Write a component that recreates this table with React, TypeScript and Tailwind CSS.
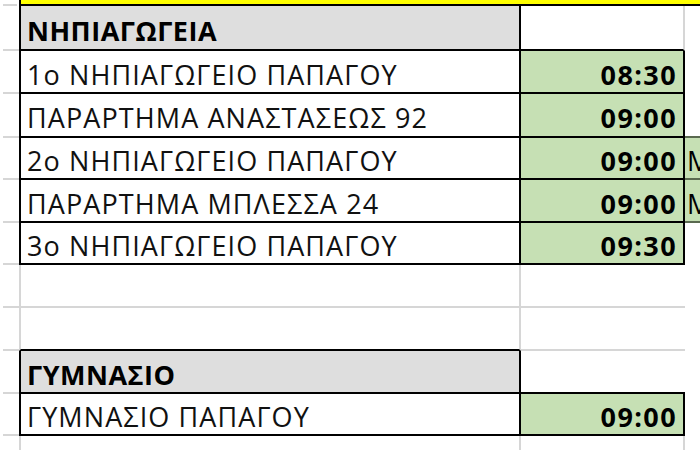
import React from 'react'

type Row = {
  kind: 'head' | 'item' | 'blank' | 'tail'
  label?: string
  time?: string
  extra?: boolean
  h: number
  headTimeRightGrid?: boolean
}

const rows: Row[] = [
  { kind: 'head', label: 'ΝΗΠΙΑΓΩΓΕΙΑ', h: 45, headTimeRightGrid: true },
  { kind: 'item', label: '1ο ΝΗΠΙΑΓΩΓΕΙΟ ΠΑΠΑΓΟΥ', time: '08:30', h: 43 },
  { kind: 'item', label: 'ΠΑΡΑΡΤΗΜΑ ΑΝΑΣΤΑΣΕΩΣ 92', time: '09:00', h: 44 },
  { kind: 'item', label: '2ο ΝΗΠΙΑΓΩΓΕΙΟ ΠΑΠΑΓΟΥ', time: '09:00', extra: true, h: 42 },
  { kind: 'item', label: 'ΠΑΡΑΡΤΗΜΑ ΜΠΛΕΣΣΑ 24', time: '09:00', extra: true, h: 43 },
  { kind: 'item', label: '3ο ΝΗΠΙΑΓΩΓΕΙΟ ΠΑΠΑΓΟΥ', time: '09:30', h: 42 },
  { kind: 'blank', h: 43 },
  { kind: 'blank', h: 43 },
  { kind: 'head', label: 'ΓΥΜΝΑΣΙΟ', h: 43 },
  { kind: 'item', label: 'ΓΥΜΝΑΣΙΟ ΠΑΠΑΓΟΥ', time: '09:00', h: 42 },
]

function Gutter() {
  // μικρές γκρι γραμμές στην αριστερή στήλη (όρια γραμμών)
  return (
    <div className="flex w-[19px] shrink-0 items-end">
      <div className="ml-[3px] h-[2px] w-[16px] bg-[#d6d6d6]" />
    </div>
  )
}

function SheetRow({ row, next }: { row: Row; next?: Row }) {
  const nextIsTable = next && next.kind !== 'blank' && next.kind !== 'tail'
  const nextIsItem = next && next.kind === 'item'

  if (row.kind === 'blank') {
    return (
      <div className="flex" style={{ height: row.h }}>
        <Gutter />
        <div
          className={`w-[502px] shrink-0 border-b-2 border-l-2 border-r-2 border-l-[#d6d6d6] border-r-[#d6d6d6] ${
            nextIsTable ? 'border-b-black' : 'border-b-[#d6d6d6]'
          }`}
        />
        <div className="w-[164px] shrink-0 border-b-2 border-b-[#d6d6d6]" />
        <div className="flex-1" />
      </div>
    )
  }

  if (row.kind === 'head') {
    return (
      <div className="flex" style={{ height: row.h }}>
        <Gutter />
        <div className="flex w-[502px] shrink-0 items-center border-x-2 border-b-2 border-black bg-[#dedede] pl-[6px] pt-[5px]">
          <span className="text-[27px] font-bold leading-none tracking-[0.5px] text-black">{row.label}</span>
        </div>
        <div
          className={`w-[164px] shrink-0 border-b-2 border-b-black ${
            row.headTimeRightGrid ? 'border-r-2 border-r-[#d6d6d6]' : ''
          }`}
        />
        <div className="flex-1" />
      </div>
    )
  }

  return (
    <div className="flex" style={{ height: row.h }}>
      <Gutter />
      <div className="flex w-[502px] shrink-0 items-center border-x-2 border-b-2 border-black pl-[6px] pt-[5px]">
        <span className="whitespace-nowrap text-[27px] font-medium leading-none tracking-[1.1px] text-[#111]">{row.label}</span>
      </div>
      <div className="flex w-[164px] shrink-0 items-center justify-end border-b-2 border-r-2 border-black bg-[#c6e0b4] pr-[6px] pt-[5px]">
        <span className="text-[27px] font-bold leading-none tracking-[1.4px] text-black">{row.time}</span>
      </div>
      {row.extra ? (
        <div className="flex flex-1 items-center overflow-hidden border-b-2 border-b-[#5a6a50] bg-[#c6e0b4] pl-[2px] pt-[5px]">
          <span className="text-[27px] font-medium leading-none text-black">Μ</span>
        </div>
      ) : (
        <div className={`flex-1 ${nextIsItem && next?.extra ? 'border-b-2 border-b-[#5a6a50]' : ''}`} />
      )}
    </div>
  )
}

export default function App() {
  return (
    <div className="h-[471px] w-[700px] overflow-hidden bg-white font-['Open_Sans',sans-serif]">
      {/* κίτρινη λωρίδα επάνω */}
      <div className="flex h-[6px]">
        <div className="flex w-[19px] shrink-0 items-end">
          <div className="ml-[3px] h-[2px] w-[14px] bg-[#d6d6d6]" />
        </div>
        <div className="flex-1 border-b-2 border-l-2 border-black bg-[#ffff00]" />
      </div>

      {rows.map((row, i) => (
        <SheetRow key={i} row={row} next={rows[i + 1]} />
      ))}

      {/* ουρά με γραμμές πλέγματος */}
      <div className="flex h-[14px]">
        <div className="w-[19px] shrink-0" />
        <div className="w-[502px] shrink-0 border-x-2 border-[#d6d6d6]" />
        <div className="w-[164px] shrink-0 border-r-2 border-[#d6d6d6]" />
      </div>
    </div>
  )
}
